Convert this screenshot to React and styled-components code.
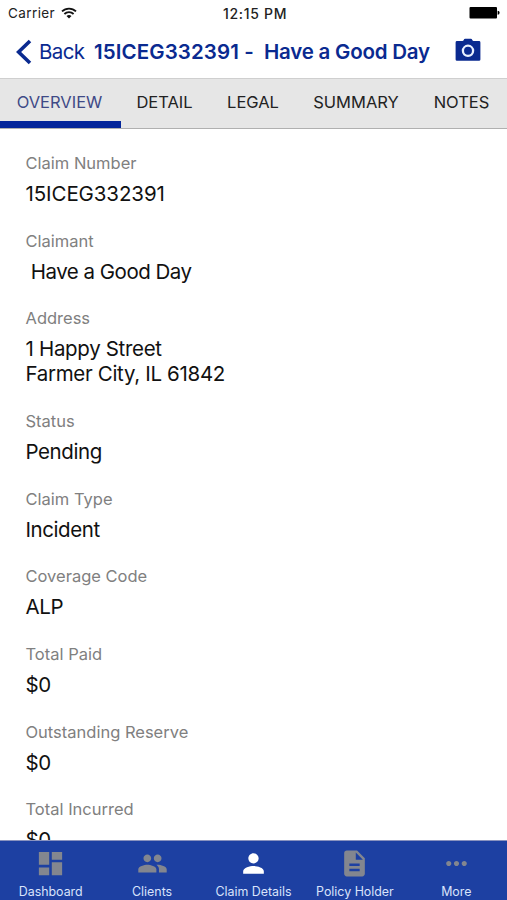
import React from "react";
import styled, { createGlobalStyle } from "styled-components";
import {
  MdDashboard,
  MdDescription,
  MdMoreHoriz,
  MdPeople,
  MdPerson,
} from "react-icons/md";

const tabs = [
  { label: "OVERVIEW", width: 119 },
  { label: "DETAIL", width: 91 },
  { label: "LEGAL", width: 86 },
  { label: "SUMMARY", width: 120 },
  { label: "NOTES", width: 91 },
];

const fields = [
  { label: "Claim Number", lines: ["15ICEG332391"], spacing: -0.1 },
  { label: "Claimant", lines: [" Have a Good Day"], spacing: -0.5 },
  { label: "Address", lines: ["1 Happy Street", "Farmer City, IL 61842"], spacing: -0.32 },
  { label: "Status", lines: ["Pending"] },
  { label: "Claim Type", lines: ["Incident"] },
  { label: "Coverage Code", lines: ["ALP"] },
  { label: "Total Paid", lines: ["$0"] },
  { label: "Outstanding Reserve", lines: ["$0"] },
  { label: "Total Incurred", lines: ["$0"] },
];

const navItems = [
  { label: "Dashboard", icon: MdDashboard },
  { label: "Clients", icon: MdPeople },
  { label: "Claim Details", icon: MdPerson, active: true },
  { label: "Policy Holder", icon: MdDescription },
  { label: "More", icon: MdMoreHoriz },
];

export default function App() {
  return (
    <Screen>
      <GlobalStyle />
      <StatusBar>
        <Carrier>
          Carrier
          <WifiIcon />
        </Carrier>
        <Clock>12:15 PM</Clock>
        <BatteryIcon />
      </StatusBar>

      <Header>
        <BackButton>
          <BackIcon />
          Back
        </BackButton>
        <Title>
          <ClaimNumber>15ICEG332391 -  </ClaimNumber>
          <ClaimantName>Have a Good Day</ClaimantName>
        </Title>
        <CameraButton aria-label="Camera">
          <CameraIcon />
        </CameraButton>
      </Header>

      <TabBar>
        {tabs.map((tab, i) => (
          <Tab key={tab.label} $width={tab.width} $active={i === 0}>
            {tab.label}
          </Tab>
        ))}
      </TabBar>

      <Details>
        {fields.map((field) => (
          <Field key={field.label}>
            <Label>{field.label}</Label>
            {field.lines.map((line) => (
              <Value key={line} $spacing={field.spacing}>
                {line}
              </Value>
            ))}
          </Field>
        ))}
      </Details>

      <BottomNav>
        {navItems.map(({ label, icon: Icon, active }) => (
          <NavItem key={label} $active={active}>
            <Icon size={31} />
            <NavLabel>{label}</NavLabel>
          </NavItem>
        ))}
      </BottomNav>
    </Screen>
  );
}

function WifiIcon() {
  return (
    <svg width="16" height="12" viewBox="0 0 16 12" fill="none">
      <path d="M1 4.4a10 10 0 0 1 14 0" stroke="#111" strokeWidth="1.8" />
      <path d="M3.4 7a6.6 6.6 0 0 1 9.2 0" stroke="#111" strokeWidth="1.8" />
      <path d="M8 11.6L5.5 9.1a3.6 3.6 0 0 1 5 0z" fill="#111" />
    </svg>
  );
}

function BatteryIcon() {
  return (
    <svg width="31" height="12" viewBox="0 0 31 12">
      <rect x="0.5" y="0" width="27.5" height="11.5" rx="1" fill="#000" />
      <path d="M28.6 3.8a2 2 0 0 1 0 4z" fill="#000" />
    </svg>
  );
}

function BackIcon() {
  return (
    <svg width="16" height="26" viewBox="0 0 16 26" fill="none">
      <path d="M14 2L2.6 13L14 24" stroke="#0a2a90" strokeWidth="3.6" />
    </svg>
  );
}

function CameraIcon() {
  return (
    <svg width="26" height="24" viewBox="0 0 26 24">
      <path
        d="M2 3h5.4q0.9 0 1.3-1.1T10.2 0.8h5.6q1.1 0 1.5 1.1T18.6 3H24a1.4 1.4 0 0 1 1.4 1.4v17a1.4 1.4 0 0 1-1.4 1.4H2a1.4 1.4 0 0 1-1.4-1.4v-17A1.4 1.4 0 0 1 2 3z"
        fill="#0a2a90"
      />
      <circle cx="13" cy="12.8" r="5.1" stroke="#e8f0ff" strokeWidth="2.3" fill="none" />
    </svg>
  );
}

const GlobalStyle = createGlobalStyle`
  * {
    box-sizing: border-box;
  }

  body {
    margin: 0;
    background: #fff;
    font-family: Inter, "Liberation Sans", sans-serif;
  }
`;

const Screen = styled.div`
  display: flex;
  flex-direction: column;
  width: 507px;
  height: 900px;
  overflow: hidden;
  background: #fff;
`;

const StatusBar = styled.div`
  display: grid;
  grid-template-columns: 1fr auto 1fr;
  align-items: center;
  flex: none;
  height: 26px;
  padding: 0 7px 0 8px;
  font-size: 13.5px;
  color: #222;

  > svg {
    justify-self: end;
  }
`;

const Carrier = styled.div`
  display: flex;
  align-items: center;
  gap: 6px;
  letter-spacing: 0.4px;
`;

const Clock = styled.div`
  margin-left: 2px;
  font-weight: 500;
  font-size: 14px;
  letter-spacing: 0.7px;
`;

const Header = styled.header`
  display: flex;
  align-items: center;
  flex: none;
  height: 52px;
  padding: 0 0 1px 16px;
  color: #0a2a90;
`;

const BackButton = styled.button`
  display: flex;
  align-items: center;
  gap: 7px;
  width: 78px;
  padding: 0;
  border: 0;
  background: none;
  color: inherit;
  font: inherit;
  font-size: 20.5px;
  letter-spacing: -0.6px;
  white-space: nowrap;
`;

const Title = styled.h1`
  display: flex;
  width: 361px;
  margin: 0;
  font-size: 20.5px;
  font-weight: 600;
  white-space: pre;
`;

const ClaimNumber = styled.span`
  width: 170px;
  letter-spacing: 0.1px;
`;

const ClaimantName = styled.span`
  letter-spacing: -0.22px;
`;

const CameraButton = styled.button`
  display: flex;
  margin-bottom: 3px;
  padding: 0;
  border: 0;
  background: none;
`;

const TabBar = styled.nav`
  display: flex;
  flex: none;
  height: 51px;
  border-top: 1px solid #cfcfcf;
  border-bottom: 1px solid #b0b0b0;
  background: linear-gradient(#03259a, #03259a) 0 100% / 121px 7px no-repeat #e6e6e6;
`;

const Tab = styled.div`
  display: flex;
  align-items: center;
  justify-content: center;
  width: ${(props) => props.$width}px;
  height: 46px;
  font-size: 16.5px;
  color: ${(props) => (props.$active ? "#3f4a86" : "#222")};
`;

const Details = styled.main`
  flex: 1;
  min-height: 0;
  padding: 21.9px 25.5px 0;
  overflow: hidden;
`;

const Field = styled.section`
  margin-bottom: 21.93px;
`;

const Label = styled.div`
  margin-bottom: 6px;
  font-size: 16.5px;
  line-height: 25px;
  color: #808080;
`;

const Value = styled.div`
  font-size: 20.5px;
  line-height: 24.8px;
  letter-spacing: ${(props) => props.$spacing ?? -0.42}px;
  color: #111;
  white-space: pre;
`;

const BottomNav = styled.nav`
  display: flex;
  flex: none;
  height: 60px;
  border-top: 1px solid #8a93bf;
  background: #1d40a2;
`;

const NavItem = styled.div`
  display: flex;
  flex: 1;
  flex-direction: column;
  align-items: center;
  padding-top: 7px;
  color: ${(props) => (props.$active ? "#fff" : "#83868f")};
`;

const NavLabel = styled.span`
  margin-top: 5px;
  font-size: 12.4px;
  line-height: 16px;
  color: #d9e3fb;
  white-space: nowrap;
`;
